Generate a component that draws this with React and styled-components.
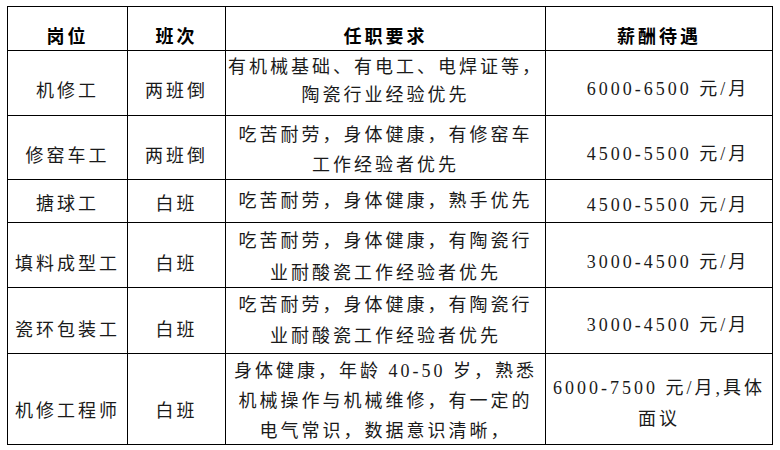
import React from 'react';
import styled, { createGlobalStyle } from 'styled-components';

const GlobalStyle = createGlobalStyle`
  html, body {
    margin: 0;
    padding: 0;
    background: #fff;
  }
  body {
    font-family: "Noto Sans CJK SC", sans-serif;
    color: #1a1a1a;
  }
`;

const Page = styled.div`
  width: 780px;
  height: 450px;
  padding: 6px 0 0 7px;
  box-sizing: border-box;
  overflow: hidden;
`;

const Table = styled.table`
  width: 765px;
  table-layout: fixed;
  border-collapse: collapse;
  font-size: 18px;
`;

const Row = styled.tr`
  height: ${(p) => p.$height}px;
`;

const HeadCell = styled.th`
  border: 1px solid #000;
  padding: 16px 0 0;
  font-weight: 700;
  font-size: 18px;
  letter-spacing: 3px;
  line-height: 24px;
  text-align: center;
  vertical-align: top;
  color: #000;
`;

const Cell = styled.td`
  border: 1px solid #000;
  padding: ${(p) => p.$top || 0}px 2px 0 ${(p) => p.$left ?? 2}px;
  text-align: center;
  vertical-align: top;
  letter-spacing: 3px;
  line-height: ${(p) => p.$lh || 24}px;
  white-space: nowrap;
`;

const Line = styled.div`
  display: block;
`;

const Num = styled.span`
  font-family: "Liberation Serif", serif;
  line-height: 18px;
`;

const Marker = styled.div`
  width: 26px;
  height: 2px;
  margin: 6px 0 0 369px;
  background: #a8a8a8;
`;

const rows = [
  {
    height: 65,
    job: '机修工',
    shift: '两班倒',
    side: 26,
    req: ['有机械基础、有电工、电焊证等，', '陶瓷行业经验优先'],
    reqLh: 28,
    reqTop: 0,
    pay: ['6000-6500 元/月'],
    payTop: 24,
  },
  {
    height: 64,
    job: '修窑车工',
    shift: '两班倒',
    side: 26,
    req: ['吃苦耐劳，身体健康，有修窑车', '工作经验者优先'],
    reqLh: 30,
    reqTop: 2,
    pay: ['4500-5500 元/月'],
    payTop: 24,
  },
  {
    height: 43,
    job: '搪球工',
    shift: '白班',
    side: 10,
    req: ['吃苦耐劳，身体健康，熟手优先'],
    reqLh: 28,
    reqTop: 5,
    pay: ['4500-5500 元/月'],
    payTop: 11,
  },
  {
    height: 64,
    job: '填料成型工',
    shift: '白班',
    side: 27,
    req: ['吃苦耐劳，身体健康，有陶瓷行', '业耐酸瓷工作经验者优先'],
    reqLh: 32,
    reqTop: 0,
    pay: ['3000-4500 元/月'],
    payTop: 25,
  },
  {
    height: 66,
    job: '瓷环包装工',
    shift: '白班',
    side: 28,
    req: ['吃苦耐劳，身体健康，有陶瓷行', '业耐酸瓷工作经验者优先'],
    reqLh: 31,
    reqTop: 0,
    pay: ['3000-4500 元/月'],
    payTop: 23,
  },
  {
    height: 90,
    job: '机修工程师',
    shift: '白班',
    side: 43,
    req: ['身体健康，年龄 40-50 岁，熟悉', '机械操作与机械维修，有一定的', '电气常识，数据意识清晰，'],
    reqLh: 30,
    reqTop: 0,
    pay: ['6000-7500 元/月,具体', '面议'],
    payLh: 31,
    payTop: 17,
    wide: true,
  },
];

// latin runs (digits, dashes, slashes) are set in the serif face
function renderText(text) {
  return text.split(/([0-9A-Za-z\-/,. ]+)/).map((part, i) =>
    i % 2 ? <Num key={i}>{part}</Num> : part
  );
}

function lines(list) {
  return list.map((t) => <Line key={t}>{renderText(t)}</Line>);
}

export default function App() {
  return (
    <Page>
      <GlobalStyle />
      <Table>
        <colgroup>
          <col style={{ width: 120 }} />
          <col style={{ width: 98 }} />
          <col style={{ width: 320 }} />
          <col style={{ width: 227 }} />
        </colgroup>
        <thead>
          <Row $height={44}>
            <HeadCell>岗位</HeadCell>
            <HeadCell>班次</HeadCell>
            <HeadCell>任职要求</HeadCell>
            <HeadCell>薪酬待遇</HeadCell>
          </Row>
        </thead>
        <tbody>
          {rows.map((r) => (
            <Row key={r.job} $height={r.height}>
              <Cell $top={r.side}>{r.job}</Cell>
              <Cell $top={r.side}>{r.shift}</Cell>
              <Cell $top={r.reqTop} $lh={r.reqLh}>
                {lines(r.req)}
              </Cell>
              <Cell $top={r.payTop} $left={r.wide ? 2 : 20} $lh={r.payLh}>
                {lines(r.pay)}
              </Cell>
            </Row>
          ))}
        </tbody>
      </Table>
      <Marker />
    </Page>
  );
}
